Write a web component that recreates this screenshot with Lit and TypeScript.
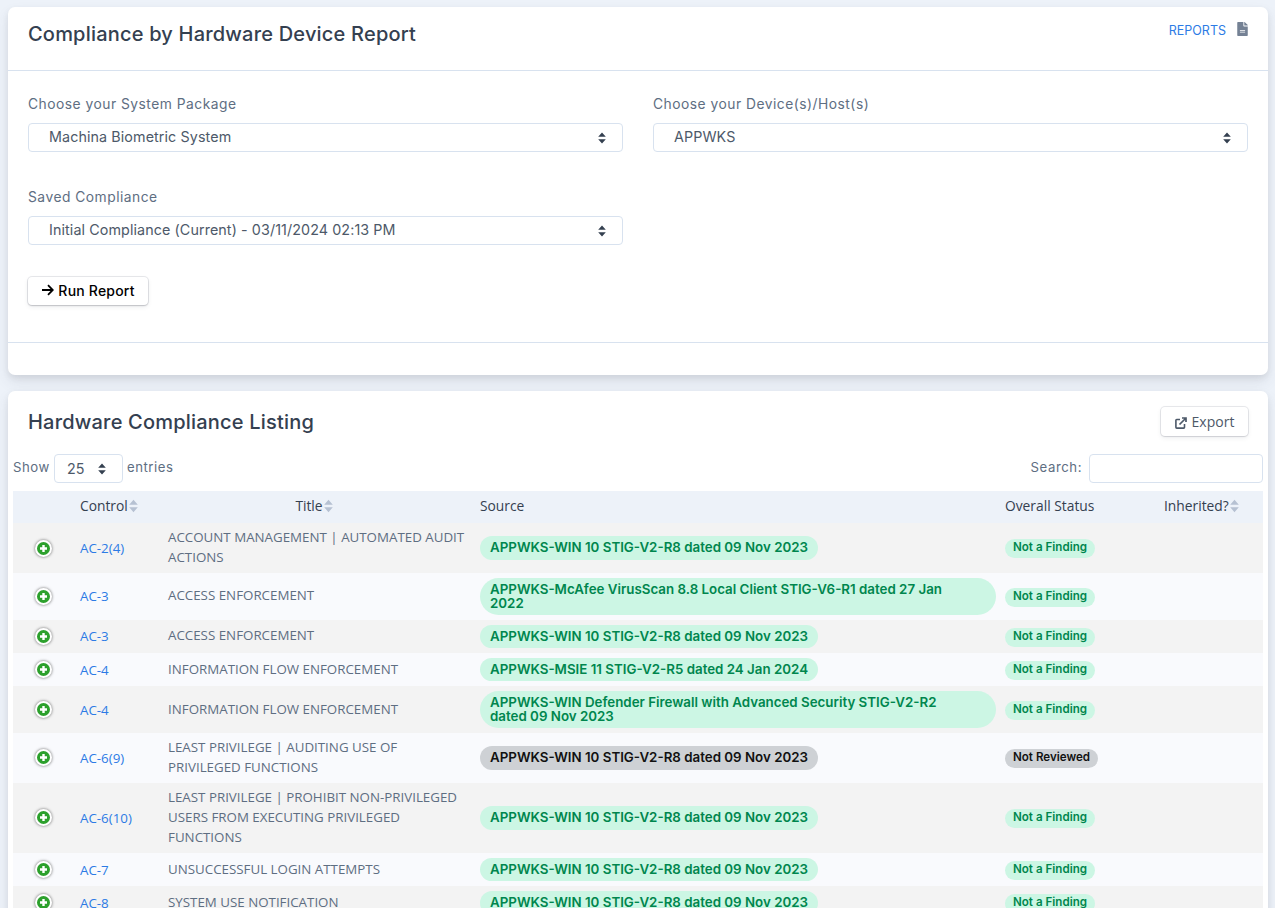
import { LitElement, html, css } from "lit";
import { customElement } from "lit/decorators.js";

type Row = { control: string; title: string; source: string[]; status: string };

const W10 = ["APPWKS-WIN 10 STIG-V2-R8 dated 09 Nov 2023"];
const NF = "Not a Finding";
const ROWS: Row[] = [
  { control: "AC-2(4)", title: "ACCOUNT MANAGEMENT | AUTOMATED AUDIT ACTIONS", source: W10, status: NF },
  { control: "AC-3", title: "ACCESS ENFORCEMENT", source: ["APPWKS-McAfee VirusScan 8.8 Local Client STIG-V6-R1 dated 27 Jan", "2022"], status: NF },
  { control: "AC-3", title: "ACCESS ENFORCEMENT", source: W10, status: NF },
  { control: "AC-4", title: "INFORMATION FLOW ENFORCEMENT", source: ["APPWKS-MSIE 11 STIG-V2-R5 dated 24 Jan 2024"], status: NF },
  { control: "AC-4", title: "INFORMATION FLOW ENFORCEMENT", source: ["APPWKS-WIN Defender Firewall with Advanced Security STIG-V2-R2", "dated 09 Nov 2023"], status: NF },
  { control: "AC-6(9)", title: "LEAST PRIVILEGE | AUDITING USE OF PRIVILEGED FUNCTIONS", source: W10, status: "Not Reviewed" },
  { control: "AC-6(10)", title: "LEAST PRIVILEGE | PROHIBIT NON-PRIVILEGED USERS FROM EXECUTING PRIVILEGED FUNCTIONS", source: W10, status: NF },
  { control: "AC-7", title: "UNSUCCESSFUL LOGIN ATTEMPTS", source: W10, status: NF },
  { control: "AC-8", title: "SYSTEM USE NOTIFICATION", source: W10, status: NF },
];

const updown = html`<svg class="updown" viewBox="0 0 8 12" width="8" height="12" aria-hidden="true">
  <path d="M4 0.5 L7.8 4.8 H0.2 Z M4 11.5 L7.8 7.2 H0.2 Z" fill="currentColor"></path>
</svg>`;

const sortIcon = html`<svg class="sort" viewBox="0 0 9 14" width="9" height="14" aria-hidden="true">
  <path d="M4.5 0.8 L8.8 5.8 H0.2 Z M4.5 13.2 L8.8 8.2 H0.2 Z" fill="currentColor"></path>
</svg>`;

@customElement("app-root")
export class AppRoot extends LitElement {
  static styles = css`
    :host {
      display: block;
      height: 908px;
      overflow: hidden;
      background: #edf2f9;
      font-family: Inter, "Liberation Sans", sans-serif;
      color: #5e6e82;
      box-sizing: border-box;
      padding: 7px 7px 0 8px;
    }
    * { box-sizing: border-box; }
    .card {
      background: #fff;
      border-radius: 7px;
      box-shadow: 0 7px 14px 0 rgba(65, 69, 88, 0.1), 0 3px 6px 0 rgba(0, 0, 0, 0.07);
    }
    .card + .card { margin-top: 16px; }
    .head {
      height: 64px;
      border-bottom: 1px solid #d8e2ef;
      padding: 0 20px;
      display: flex;
      justify-content: space-between;
    }
    h1, h2 {
      margin: 0;
      font-size: 20px;
      line-height: 28px;
      font-weight: 450;
      letter-spacing: 0.2px;
      color: #344050;
    }
    h1 { padding-top: 13px; }
    .reports {
      display: flex;
      gap: 11px;
      padding-top: 15px;
      font-size: 12.5px;
      line-height: 16px;
      color: #2c7be5;
    }
    .reports span { padding-top: 1px; }
    .doc { color: #748194; }
    .body { padding: 23px 20px 37px; border-bottom: 1px solid #d8e2ef; }
    .grid {
      display: grid;
      grid-template-columns: 595px 595px;
      column-gap: 30px;
      row-gap: 35px;
    }
    label {
      display: block;
      font-size: 13.8px;
      line-height: 21px;
      letter-spacing: 0.5px;
      margin-bottom: 8px;
    }
    .select {
      height: 29px;
      border: 1px solid #d8e2ef;
      border-radius: 4px;
      background: #fff;
      display: flex;
      align-items: center;
      justify-content: space-between;
      padding: 0 16px 0 20px;
      font-size: 14.3px;
      letter-spacing: 0.1px;
      color: #4d5969;
    }
    .select > span { padding-bottom: 2px; }
    .updown { color: #344050; }
    .run {
      display: flex;
      align-items: center;
      gap: 4px;
      height: 28px;
      width: 120px;
      margin-top: 32px;
      padding: 0 0 2px;
      justify-content: center;
      background: #fff;
      border: none;
      border-radius: 4px;
      font: 500 14px Inter, "Liberation Sans", sans-serif;
      letter-spacing: 0.2px;
      color: #000;
      box-shadow: 0 0 0 1px rgba(43, 45, 80, 0.1), 0 2px 5px 0 rgba(43, 45, 80, 0.08), 0 1px 1.5px 0 rgba(0, 0, 0, 0.07), 0 1px 2px 0 rgba(0, 0, 0, 0.08);
    }
    .foot { height: 32px; }
    .card2 { padding-bottom: 20px; }
    .head2 {
      display: flex;
      justify-content: space-between;
      align-items: center;
      padding: 16px 20px 18px 20px;
    }
    .export {
      display: inline-flex;
      align-items: center;
      justify-content: center;
      gap: 5px;
      width: 87px;
      height: 29px;
      background: #fff;
      border: none;
      border-radius: 4px;
      font: 14px "Open Sans", sans-serif;
      color: #4d5969;
      box-shadow: 0 0 0 1px rgba(43, 45, 80, 0.1), 0 2px 5px 0 rgba(43, 45, 80, 0.08), 0 1px 1.5px 0 rgba(0, 0, 0, 0.07);
    }
    .export svg { margin-top: 2px; }
    .tools {
      display: flex;
      justify-content: space-between;
      align-items: center;
      padding: 0 5px;
      font-size: 13.2px;
      letter-spacing: 0.55px;
      margin-bottom: 8px;
    }
    .tools > div { display: flex; align-items: center; gap: 4px; }
    .cap { padding-bottom: 4px; }
    .len {
      width: 69px;
      height: 29px;
      border: 1px solid #d8e2ef;
      border-radius: 4px;
      display: flex;
      align-items: center;
      justify-content: space-between;
      padding: 0 16px 0 12px;
      font-size: 14.3px;
      letter-spacing: 0;
      color: #4d5969;
    }
    .search { width: 174px; height: 29px; border: 1px solid #d8e2ef; border-radius: 4px; margin-left: 3px; }
    .wrap { padding: 0 5px; }
    table {
      width: 1250px;
      border-collapse: collapse;
      table-layout: fixed;
      font-family: "Open Sans", sans-serif;
      font-size: 13.33px;
      line-height: 20px;
    }
    th {
      height: 32px;
      background: #edf2f9;
      color: #344050;
      font-weight: 500;
      font-size: 13.8px;
      text-align: left;
      padding: 0 0 2px 10px;
      white-space: nowrap;
    }
    th.center { text-align: center; padding: 0 0 2px; }
    th.st { padding-left: 9px; }
    th .sort { color: #b6c1d2; vertical-align: -2px; margin-left: 1px; }
    td { padding: 5px 0 5px 10px; vertical-align: middle; }
    tbody tr:nth-child(odd) { background: #f3f3f3; }
    tbody tr:nth-child(even) { background: #f9fafd; }
    td.title { padding-top: 4px; padding-bottom: 6px; }
    td.st { padding-left: 9px; }
    a { color: #2c7be5; text-decoration: none; }
    .plus {
      display: block;
      width: 17px;
      height: 17px;
      margin-left: 12px;
      border-radius: 50%;
      background: #2ca02c;
      border: 2px solid #fff;
      box-shadow: 0 0 3px #666;
    }
    .plus svg { display: block; width: 13px; height: 13px; }
    .pill {
      display: inline-block;
      padding: 4px 10px 5.33px;
      border-radius: 19px;
      font-family: Inter, "Liberation Sans", sans-serif;
      font-size: 13.33px;
      line-height: 14px;
      font-weight: 600;
      vertical-align: middle;
    }
    .pill.wide { width: 516px; padding-bottom: 4.67px; }
    .ok { background: #ccf6e4; color: #00864e; }
    .no { background: #ced1d5; color: #111; }
    .tag {
      display: inline-block;
      padding: 2px 8px 5px;
      border-radius: 10px;
      font-family: Inter, "Liberation Sans", sans-serif;
      font-size: 11.6px;
      line-height: 12px;
      font-weight: 600;
      vertical-align: middle;
    }
  `;

  private row(r: Row) {
    const cls = r.status === NF ? "ok" : "no";
    const wide = r.source.length > 1 ? "wide" : "";
    return html`<tr>
      <td><span class="plus"><svg viewBox="0 0 13 13"><path d="M6.500 3v7M3 6.500h7" stroke="#fff" stroke-width="2.400"></path></svg></span></td>
      <td><a href="#">${r.control}</a></td>
      <td class="title">${r.title}</td>
      <td><span class="pill ${cls} ${wide}">${r.source.map((l, i) => (i ? html`<br />${l}` : l))}</span></td>
      <td class="st"><span class="tag ${cls}">${r.status}</span></td>
      <td></td>
    </tr>`;
  }

  render() {
    return html`
      <section class="card">
        <div class="head">
          <h1>Compliance by Hardware Device Report</h1>
          <div class="reports">
            <span>REPORTS</span>
            <svg class="doc" width="11" height="14" viewBox="0 0 384 512" aria-hidden="true">
              <path fill="currentColor" d="M224 136V0H24C10.700 0 0 10.700 0 24v464c0 13.300 10.700 24 24 24h336c13.300 0 24-10.700 24-24V160H248c-13.200 0-24-10.800-24-24zm64 236c0 6.600-5.400 12-12 12H108c-6.600 0-12-5.400-12-12v-8c0-6.600 5.400-12 12-12h168c6.600 0 12 5.400 12 12v8zm0-64c0 6.600-5.400 12-12 12H108c-6.600 0-12-5.400-12-12v-8c0-6.600 5.400-12 12-12h168c6.600 0 12 5.400 12 12v8zm96-186.100v6.100H256V0h6.100c6.400 0 12.500 2.500 17 7l97.900 98c4.500 4.500 7 10.600 7 16.900z"></path>
            </svg>
          </div>
        </div>
        <div class="body">
          <div class="grid">
            <div><label>Choose your System Package</label><div class="select"><span>Machina Biometric System</span>${updown}</div></div>
            <div><label>Choose your Device(s)/Host(s)</label><div class="select"><span>APPWKS</span>${updown}</div></div>
            <div><label>Saved Compliance</label><div class="select"><span>Initial Compliance (Current) - 03/11/2024 02:13 PM</span>${updown}</div></div>
          </div>
          <button class="run">
            <svg width="13" height="12" viewBox="0 0 13 12" aria-hidden="true"><path d="M1 6h10.500M7 1.200 11.800 6 7 10.800" fill="none" stroke="#000" stroke-width="1.800"></path></svg>
            Run Report
          </button>
        </div>
        <div class="foot"></div>
      </section>
      <section class="card card2">
        <div class="head2">
          <h2>Hardware Compliance Listing</h2>
          <button class="export">
            <svg width="12" height="12" viewBox="0 0 12 12" aria-hidden="true"><path d="M5 2.500H1.700a.8.8 0 0 0-.8.8v7a.8.8 0 0 0 .8.8h7a.8.8 0 0 0 .8-.8V7" fill="none" stroke="#4d5969" stroke-width="1.600"></path><path d="M4.500 7.500 10.500 1.500M7 1h4v4" fill="none" stroke="#4d5969" stroke-width="1.700"></path></svg>
            Export
          </button>
        </div>
        <div class="tools">
          <div><span class="cap">Show</span><span class="len"><span>25</span>${updown}</span><span class="cap">entries</span></div>
          <div><span class="cap">Search:</span><span class="search"></span></div>
        </div>
        <div class="wrap">
          <table>
            <colgroup>
              <col style="width:57px" /><col style="width:88px" /><col style="width:312px" />
              <col style="width:526px" /><col style="width:158px" /><col style="width:109px" />
            </colgroup>
            <thead>
              <tr>
                <th></th>
                <th>Control${sortIcon}</th>
                <th class="center">Title${sortIcon}</th>
                <th>Source</th>
                <th class="st">Overall Status</th>
                <th>Inherited?${sortIcon}</th>
              </tr>
            </thead>
            <tbody>${ROWS.map((r) => this.row(r))}</tbody>
          </table>
        </div>
      </section>
    `;
  }
}
